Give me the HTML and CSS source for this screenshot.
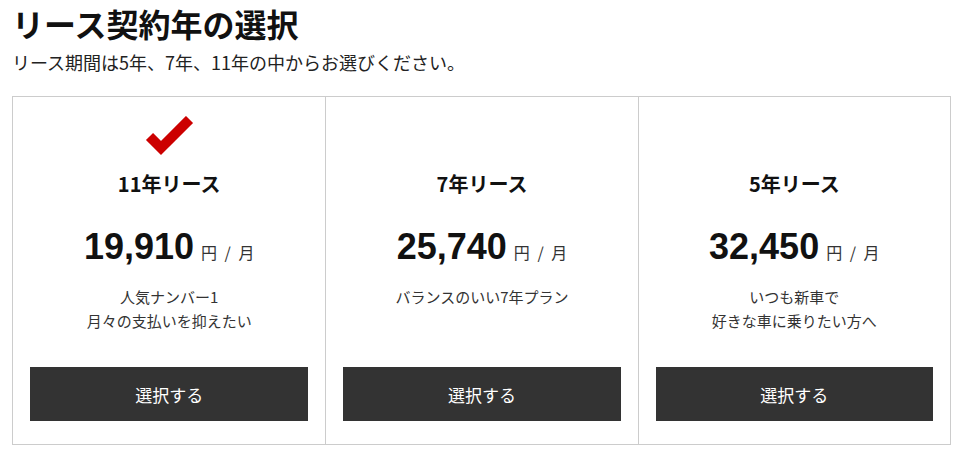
FILE: index.html
```html
<!DOCTYPE html>
<html lang="ja">
<head>
    <meta charset="UTF-8">
    <meta name="viewport" content="width=device-width, initial-scale=1.0">
    <title>リース契約年の選択</title>
    <link rel="stylesheet" href="styles.css">
</head>
<body>
    <h1 class="title">リース契約年の選択</h1>
    <p class="lead">リース期間は5年、7年、11年の中からお選びください。</p>

    <div class="plans">
        <div class="plan is-selected">
            <div class="check">
                <svg width="50" height="40" viewBox="0 0 50 40">
                    <polyline points="5.5,20.5 17,32 45.5,3.5" fill="none" stroke="#cc0000" stroke-width="10"></polyline>
                </svg>
            </div>
            <h2 class="plan-name">11年リース</h2>
            <div class="price"><span class="amount">19,910</span><span class="unit">円 / 月</span></div>
            <p class="desc">人気ナンバー1<br>月々の支払いを抑えたい</p>
            <button class="select-btn">選択する</button>
        </div>

        <div class="plan">
            <div class="check"></div>
            <h2 class="plan-name">7年リース</h2>
            <div class="price"><span class="amount">25,740</span><span class="unit">円 / 月</span></div>
            <p class="desc">バランスのいい7年プラン</p>
            <button class="select-btn">選択する</button>
        </div>

        <div class="plan">
            <div class="check"></div>
            <h2 class="plan-name">5年リース</h2>
            <div class="price"><span class="amount">32,450</span><span class="unit">円 / 月</span></div>
            <p class="desc">いつも新車で<br>好きな車に乗りたい方へ</p>
            <button class="select-btn">選択する</button>
        </div>
    </div>
</body>
</html>
```

FILE: styles.css
```css
body {
    margin: 0;
    padding: 0 15px 0 12px;
    font-family: "Noto Sans CJK JP", "Noto Sans", sans-serif;
    color: #111;
    background-color: #fff;
}
.title {
    margin: 0;
    font-size: 32px;
    line-height: 46px;
    font-weight: bold;
}
.lead {
    margin: 0;
    font-size: 18px;
    line-height: 32px;
    color: #222;
}
.plans {
    display: grid;
    grid-template-columns: 1fr 1fr 1fr;
    margin-top: 18px;
    border: 1px solid #ccc;
}
.plan {
    display: flex;
    flex-direction: column;
    align-items: center;
    padding: 19px 17px 23px;
    text-align: center;
}
.plan + .plan {
    border-left: 1px solid #ccc;
}
.check {
    height: 40px;
}
.check svg {
    display: block;
}
.plan-name {
    margin: 14px 0 0;
    font-size: 20px;
    line-height: 28px;
    font-weight: bold;
}
.price {
    margin-top: 27px;
    line-height: 44px;
}
.amount {
    font-family: "Liberation Sans", Arial, sans-serif;
    font-size: 36px;
    font-weight: bold;
}
.unit {
    margin-left: 7px;
    font-size: 16px;
    word-spacing: 4px;
    color: #333;
}
.desc {
    margin: 11px 0 34px;
    font-size: 15px;
    line-height: 24px;
    color: #333;
}
.select-btn {
    margin-top: auto;
    width: 100%;
    height: 54px;
    border: none;
    background-color: #333;
    color: #fff;
    font-family: inherit;
    font-size: 17px;
    cursor: pointer;
}
```
